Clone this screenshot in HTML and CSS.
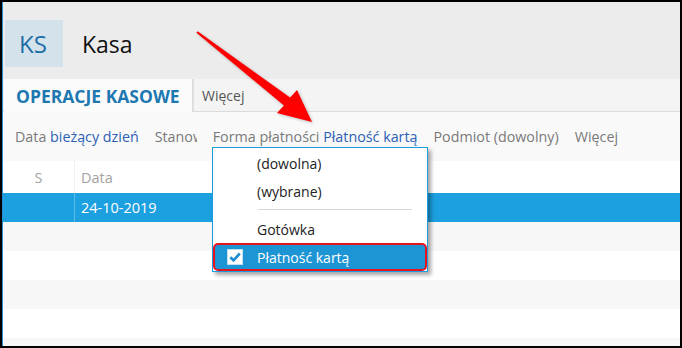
FILE: index.html
```html
<!DOCTYPE html>
<html lang="pl">
<head>
    <meta charset="UTF-8">
    <meta name="viewport" content="width=device-width, initial-scale=1.0">
    <title>Kasa</title>
    <link rel="stylesheet" href="styles.css">
</head>
<body>
    <div class="window">
        <div class="app">
            <header class="app-head">
                <div class="badge">KS</div>
                <h1>Kasa</h1>
            </header>

            <nav class="tabs">
                <div class="tab active">OPERACJE KASOWE</div>
                <div class="tab">Więcej</div>
            </nav>

            <div class="filters">
                <span class="filter">Data <b>bieżący dzień</b></span>
                <span class="filter clipped">Stanowisko</span>
                <span class="filter">Forma płatności <b>Płatność kartą</b></span>
                <span class="filter">Podmiot (dowolny)</span>
                <span class="filter">Więcej</span>
            </div>

            <div class="grid">
                <div class="row head">
                    <div class="cell col-s">S</div>
                    <div class="cell col-date">Data</div>
                </div>
                <div class="row selected">
                    <div class="cell col-s"></div>
                    <div class="cell col-date">24-10-2019</div>
                </div>
                <div class="row alt"></div>
                <div class="row"></div>
                <div class="row alt"></div>
                <div class="row"></div>
                <div class="row alt"></div>
            </div>
        </div>

        <!-- Dropdown for Forma płatności -->
        <div class="dropdown">
            <div class="item">(dowolna)</div>
            <div class="item">(wybrane)</div>
            <div class="sep"></div>
            <div class="item">Gotówka</div>
            <div class="item checked">
                <span class="check">
                    <svg width="14" height="14" viewBox="0 0 14 14"><path d="M2.3 7.2 L5.5 10.3 L11.8 3.5" fill="none" stroke="#1c8fd3" stroke-width="2.6"/></svg>
                </span>
                Płatność kartą
            </div>
        </div>

        <svg class="arrow" width="678" height="344" viewBox="2 2 678 344">
            <polygon points="197.6,31.2 290.1,97.6 297,90 312,122 277,113 283.9,105.4 196.4,32.8" fill="#ff0000"/>
        </svg>
    </div>
</body>
</html>
```

FILE: styles.css
```css
/* Base */
* {
    box-sizing: border-box;
}

body {
    margin: 0;
    font-family: 'Open Sans', 'Noto Sans', sans-serif;
    background: #000;
}

.window {
    position: relative;
    width: 682px;
    height: 348px;
    border: 2px solid #000;
    background: #fff;
    overflow: hidden;
}

.app {
    height: 100%;
    border-left: 1px solid #2a8fd0;
}

/* App header */
.app-head {
    display: flex;
    align-items: center;
    height: 77px;
    padding: 17px 0 11px 2px;
    background: #ececec;
}

.badge {
    width: 58px;
    height: 47px;
    padding-right: 2px;
    background: #d4e2eb;
    color: #1c6ea6;
    font-size: 24px;
    display: flex;
    align-items: center;
    justify-content: center;
}

.app-head h1 {
    margin: 0 0 0 19px;
    font-size: 23px;
    font-weight: normal;
    color: #111;
}

/* Tabs */
.tabs {
    display: flex;
    height: 33px;
    background: #f4f4f4;
    border-bottom: 1px solid #dcdcdc;
    padding-left: 1px;
}

.tab {
    padding: 0 8px;
    display: flex;
    align-items: center;
    font-size: 14px;
    color: #555;
    border-left: 1px solid #e0e0e0;
}

.tab.active {
    width: 189px;
    padding-left: 12px;
    margin-bottom: -1px;
    background: #fbfbfb;
    border-left: none;
    border-right: 1px solid #dcdcdc;
    color: #1d78b2;
    font-weight: bold;
    font-size: 17.5px;
}

/* Filter bar */
.filters {
    display: flex;
    align-items: center;
    height: 49px;
    padding-left: 12px;
    padding-bottom: 1px;
    gap: 16px;
    background: #f9f9f9;
    font-size: 14.3px;
    color: #7a7a7a;
}

.filter b {
    font-weight: normal;
    color: #2d5fb4;
}

.filter.clipped {
    width: 42px;
    overflow: hidden;
    white-space: nowrap;
}

/* Grid */
.row {
    display: flex;
    height: 29px;
}

.row.alt {
    background: #f7f7f7;
}

.row.head {
    height: 32px;
    background: #fff;
    color: #a3a3a3;
    font-size: 14.5px;
}

.cell {
    display: flex;
    align-items: center;
    padding-left: 6px;
}

.col-s {
    width: 72px;
    justify-content: center;
    padding-left: 0;
    border-right: 1px dotted #e4e4e4;
}

.row.selected {
    background: #1ca0e0;
    color: #fff;
    font-size: 14.5px;
}

.row.selected .col-s {
    border-right: 1px solid #5cbbe9;
}

/* Dropdown */
.dropdown {
    position: absolute;
    left: 210px;
    top: 145px;
    width: 216px;
    height: 125px;
    padding-top: 1px;
    background: #fff;
    border: 1px solid #1d9be0;
    box-shadow: 3px 3px 4px rgba(0, 0, 0, 0.35);
    font-size: 14px;
    color: #222;
}

.item {
    height: 28px;
    display: flex;
    align-items: center;
    padding-left: 44px;
}

.sep {
    height: 1px;
    margin: 4px 15px 5px 45px;
    background: #d8d8d8;
}

.item.checked {
    position: relative;
    padding-left: 42px;
    border: 2px solid #e8141c;
    border-radius: 5px;
    background: #1d95d4;
    color: #fff;
}

.check {
    position: absolute;
    left: 12px;
    top: 4px;
    width: 16px;
    height: 16px;
    background: #fff;
    border: 1px solid #bcdff2;
    display: flex;
    align-items: center;
    justify-content: center;
}

/* Red pointer arrow over the page */
.arrow {
    position: absolute;
    left: 0;
    top: 0;
    pointer-events: none;
    filter: drop-shadow(1px 1px 1.5px rgba(0, 0, 0, 0.25));
}
```
